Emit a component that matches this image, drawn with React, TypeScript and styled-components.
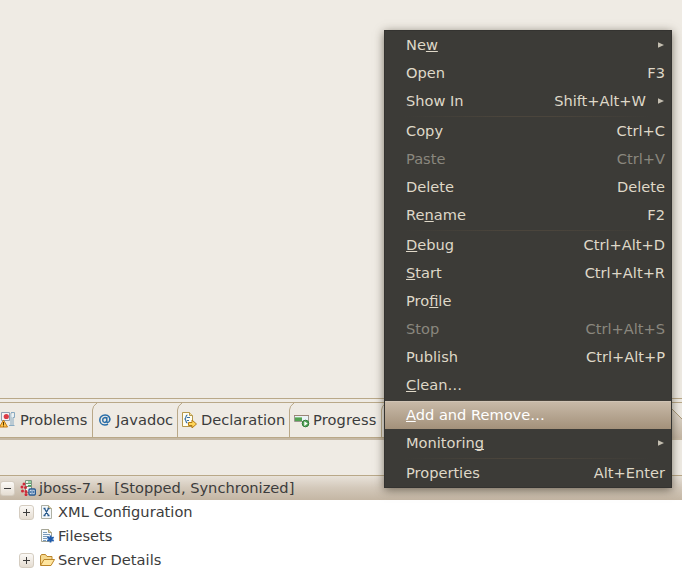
import React from "react";
import styled, { createGlobalStyle, css } from "styled-components";

const Global = createGlobalStyle`
  * { box-sizing: border-box; }
  body { margin: 0; overflow: hidden; }
`;

const Screen = styled.div`
  position: relative;
  width: 682px;
  height: 575px;
  overflow: hidden;
  display: flex;
  flex-direction: column;
  background: #efebe4;
  color: #3c3c3c;
  font: 14.63px/24px "DejaVu Sans", sans-serif;
  white-space: pre;
`;

const Editor = styled.div`
  height: 399px;
  border-bottom: 1px solid #b9a888;
`;

const TabBar = styled.div`
  display: flex;
  height: 38px;
  margin-top: 3px;
  border-top: 1px solid #b9a888;
  border-bottom: 2px solid #c6b9a5;
  box-shadow: inset 0 -1px 0 #b9a888;
`;

const Tab = styled.div<{ $width: number; $first?: boolean }>`
  position: relative;
  display: flex;
  align-items: center;
  flex: none;
  width: ${(p) => p.$width}px;
  height: 34px;
  padding-left: ${(p) => (p.$first ? 0 : 5)}px;
`;

const TabEdge = styled.svg`
  position: absolute;
  left: 0;
  top: -1px;
`;

const Icon = styled.svg`
  flex: none;
  width: 16px;
  height: 16px;
`;

const Label = styled.span<{ $gap: number; $tracking?: number }>`
  margin-left: ${(p) => p.$gap}px;
  letter-spacing: ${(p) => p.$tracking ?? 0}px;
`;

const ActiveTabEnd = styled.svg`
  margin-left: auto;
  flex: none;
`;

const Toolbar = styled.div`
  height: 35px;
`;

const Tree = styled.div`
  flex: 1;
  border-top: 1px solid #b9a888;
  background: #fff;
`;

const TreeRow = styled.div<{ $selected?: boolean; $indent: number }>`
  display: flex;
  align-items: center;
  height: 24px;
  padding-left: ${(p) => p.$indent}px;
  ${(p) =>
    p.$selected &&
    css`
      background: linear-gradient(#e8e2d9, #d3c8ba 50%, #c4b6a4);
    `}
`;

const Expander = styled.span`
  flex: none;
  width: 15px;
  height: 15px;
  margin-right: 5px;
  border: 1px solid #d5cdc1;
  border-radius: 3px;
  background: linear-gradient(#fbf9f6, #e5ddd2);
`;

const ExpanderSign = styled.svg`
  display: block;
  width: 13px;
  height: 13px;
`;

const Menu = styled.div`
  position: absolute;
  left: 384px;
  top: 30px;
  width: 288px;
  height: 458px;
  border: 1px solid #343330;
  background: #3c3b37;
  box-shadow: 0 2px 9px rgba(60, 50, 35, 0.65);
  font-size: 14.6px;
`;

const MenuItem = styled.div<{ $disabled?: boolean; $active?: boolean }>`
  display: flex;
  align-items: center;
  height: 28px;
  padding: 0 6px 0 21px;
  color: ${(p) => (p.$active ? "#fff" : p.$disabled ? "#8a877e" : "#dfd8c8")};
  ${(p) =>
    p.$active &&
    css`
      background: linear-gradient(#c9bba9, #a3917a);
      box-shadow: inset 0 1px 0 #d0c4b5;
    `}
`;

const Shortcut = styled.span<{ $submenu?: boolean }>`
  margin-left: auto;
  margin-right: ${(p) => (p.$submenu ? 12 : 0)}px;
`;

const Arrow = styled.svg<{ $alone?: boolean }>`
  flex: none;
  width: 6px;
  height: 6px;
  margin-right: 1px;
  margin-left: ${(p) => (p.$alone ? "auto" : "0")};
`;

const Separator = styled.div`
  height: 2px;
  padding: 1px 20px 0;
  background: linear-gradient(90deg, transparent, #4b453c 40%, #4b453c 60%, transparent) content-box;
`;

const Mnemonic = styled.span`
  text-decoration: underline;
  text-decoration-thickness: 1px;
  text-underline-offset: 1px;
  text-decoration-skip-ink: none;
`;

const ProblemsIcon = () => (
  <Icon viewBox="0 0 16 16">
    <path d="M1.5.5h8v8h-8z" fill="#f6f3f4" stroke="#8f9fb2" />
    <circle cx="6.3" cy="4.5" r="2.6" fill="#dc3b46" />
    <path d="M11 .5h3.5v5H13v8h1.500M11 1v12.500M9 13.500h4" fill="none" stroke="#88aac2" />
    <path d="M11.500 2h2v3h-2z" fill="#e9f3f8" />
    <path d="M3.5 8l4 7h-8z" fill="#ffc34c" stroke="#c57a12" />
    <path d="M3 10h1v3H3zm0 3.500h1v1H3z" fill="#523600" />
  </Icon>
);

const JavadocIcon = () => (
  <Icon viewBox="0 0 16 16">
    <path
      d="M9.8 5v4.600c0 1.400 2.200.9 2.700-.7C13.700 5.500 11.500 3 8.200 3 4.800 3 2.800 5.200 2.800 8s2 5 5 5c1.400 0 2.500-.3 3.200-.8M9.400 6.400C8.900 5.200 5.700 5.200 5.700 8c0 3 3 3 3.800 1"
      fill="none"
      stroke="#286da8"
      strokeWidth="1.500"
    />
  </Icon>
);

const DeclarationIcon = () => (
  <Icon viewBox="0 0 16 16">
    <path d="M.5.500h7l3 3v11H.5z" fill="#fffef2" stroke="#b5984b" />
    <path d="M7.500.500v3h3" fill="#f3dda0" stroke="#b5984b" />
    <path d="M5.500 3C3 3 5 6.500 2.500 7 5 7.500 3 11 5.500 11M5 5.500h3M5 8.500h2" fill="none" stroke="#3770a7" strokeWidth="1.200" />
    <path d="M6.500 10.500h3.500v-2.500l4.500 4-4.500 4v-2.500H6.500z" fill="#ffd65a" stroke="#b47b16" />
  </Icon>
);

const ProgressIcon = () => (
  <Icon viewBox="0 0 16 16">
    <path d="M.5 3.500h14v6H.5z" fill="#eaf3f7" stroke="#9b968f" />
    <path d="M0 3h15v1H0z" fill="#9b8476" />
    <path d="M1 5h7v4H1z" fill="#53a253" />
    <path d="M1 5h7v1H1z" fill="#8cc789" />
    <circle cx="11.500" cy="11.500" r="3.300" fill="#55a458" stroke="#2b7936" />
    <path d="M10.300 9.200l3.400 2.300-3.400 2.400z" fill="#fff" />
  </Icon>
);

const ServerIcon = () => (
  <Icon viewBox="0 0 16 16">
    <path d="M5.500.500h6v12h-6z" fill="#edf1ed" stroke="#7e9580" />
    <path d="M6 3.500h5M6 6.500h5" stroke="#6e8f75" />
    <path d="M8 1.500h3v1H8zm0 3.500h3v1H8z" fill="#38b254" />
    <path
      d="M4 4v.1M2 7v.1M5.500 7.500v.1M2.500 11v.1M6 11.500v.1M6 14.500v.1"
      fill="none"
      stroke="#cf2939"
      strokeWidth="3"
      strokeLinecap="round"
    />
    <rect x="9" y="9" width="6.300" height="6" rx="1" fill="#eaf2fb" stroke="#245790" strokeWidth="1.400" />
    <path d="M10.700 11h3v2h-3z" fill="#b8d3ed" stroke="#245790" strokeWidth=".8" />
  </Icon>
);

const XmlIcon = () => (
  <Icon viewBox="0 0 16 16">
    <path d="M2.500 1.500h7l3 3v10h-10z" fill="#f4f8fb" stroke="#aeb0a4" />
    <path d="M9.500 1.500v3h3" fill="#e6d9a8" stroke="#b1a987" />
    <path d="M5.500 4.500l4 7M9.500 4.500l-4 7M4.500 4.500h2M8.500 4.500h2M4.500 11.500h2M8.500 11.500h2" stroke="#245789" strokeWidth="1.300" />
  </Icon>
);

const FilesetIcon = () => (
  <Icon viewBox="0 0 16 16">
    <path d="M2.500 1.500h7l3 3v9h-10z" fill="#f8fbfd" stroke="#a5a698" />
    <path d="M9.500 1.500v3h3" fill="#e6d9a8" stroke="#aca178" />
    <path d="M4 4.500h4M4 6.500h7M4 8.500h6M4 10.500h4M4 12.500h3" stroke="#7a9bbb" />
    <path d="M11.500 7.500v7M8.300 9.300l6.400 3.600M14.700 9.300l-6.400 3.600" stroke="#1f5cad" strokeWidth="1.800" />
  </Icon>
);

const FolderIcon = () => (
  <Icon viewBox="0 0 16 16">
    <path d="M1.500 13V4l1-1.500h4L8 4.500h5v3" fill="#f6d98f" stroke="#bc8529" />
    <path d="M1.500 13.500l3.500-6h10.500l-3.500 6z" fill="#ffe6a0" stroke="#bc8529" />
  </Icon>
);

type TabSpec = { label: string; width: number; gap: number; tracking?: number; icon: React.ReactNode };

const tabs: TabSpec[] = [
  { label: "Problems", width: 92, gap: 4, icon: <ProblemsIcon /> },
  { label: "Javadoc", width: 85, gap: 3, icon: <JavadocIcon /> },
  { label: "Declaration", width: 112, gap: 3, icon: <DeclarationIcon /> },
  { label: "Progress", width: 92, gap: 3, tracking: 0.12, icon: <ProgressIcon /> },
  { label: "", width: 90, gap: 0, icon: null },
];

type Entry = {
  label: string;
  key?: string;
  shortcut?: string;
  submenu?: boolean;
  disabled?: boolean;
  active?: boolean;
};

const groups: Entry[][] = [
  [
    { label: "New", key: "w", submenu: true },
    { label: "Open", shortcut: "F3" },
    { label: "Show In", shortcut: "Shift+Alt+W", submenu: true },
  ],
  [
    { label: "Copy", shortcut: "Ctrl+C" },
    { label: "Paste", shortcut: "Ctrl+V", disabled: true },
    { label: "Delete", shortcut: "Delete" },
    { label: "Rename", key: "n", shortcut: "F2" },
  ],
  [
    { label: "Debug", key: "D", shortcut: "Ctrl+Alt+D" },
    { label: "Start", key: "S", shortcut: "Ctrl+Alt+R" },
    { label: "Profile", key: "fi" },
    { label: "Stop", shortcut: "Ctrl+Alt+S", disabled: true },
    { label: "Publish", shortcut: "Ctrl+Alt+P" },
    { label: "Clean…", key: "C" },
  ],
  [
    { label: "Add and Remove…", key: "A", active: true },
    { label: "Monitoring", key: "g", submenu: true },
  ],
  [{ label: "Properties", shortcut: "Alt+Enter" }],
];

function MenuLabel({ text, mnemonic }: { text: string; mnemonic?: string }) {
  if (!mnemonic) return <span>{text}</span>;
  const at = text.lastIndexOf(mnemonic);
  return (
    <span>
      {text.slice(0, at)}
      <Mnemonic>{mnemonic}</Mnemonic>
      {text.slice(at + mnemonic.length)}
    </span>
  );
}

function Toggle({ open }: { open?: boolean }) {
  return (
    <Expander>
      <ExpanderSign viewBox="0 0 13 13">
        <path d={open ? "M3 6.500h7" : "M3 6.500h7M6.500 3v7"} stroke="#3c3c3c" />
      </ExpanderSign>
    </Expander>
  );
}

export default function App() {
  return (
    <>
      <Global />
      <Screen>
        <Editor />
        <TabBar>
          {tabs.map((tab, i) => (
            <Tab key={i} $width={tab.width} $first={i === 0}>
              {i > 0 && (
                <TabEdge width="8" height="36">
                  <path d="M.5 36V8Q.5 4 5 1" fill="none" stroke="#b9a888" />
                </TabEdge>
              )}
              {tab.icon}
              <Label $gap={tab.gap} $tracking={tab.tracking}>
                {tab.label}
              </Label>
            </Tab>
          ))}
          <ActiveTabEnd width="22" height="35">
            <defs>
              <linearGradient id="tabFill" x1="0" y1="0" x2="0" y2="1">
                <stop offset="0" stopColor="#e8e2d9" />
                <stop offset="1" stopColor="#c4b6a4" />
              </linearGradient>
            </defs>
            <path d="M0 0h6l16 16v19H0z" fill="url(#tabFill)" />
            <path d="M6 0l16 16" stroke="#a99878" />
          </ActiveTabEnd>
        </TabBar>
        <Toolbar />
        <Tree>
          <TreeRow $selected $indent={0}>
            <Toggle open />
            <ServerIcon />
            <Label $gap={3}>jboss-7.1  [Stopped, Synchronized]</Label>
          </TreeRow>
          <TreeRow $indent={19}>
            <Toggle />
            <XmlIcon />
            <Label $gap={3}>XML Configuration</Label>
          </TreeRow>
          <TreeRow $indent={39}>
            <FilesetIcon />
            <Label $gap={3}>Filesets</Label>
          </TreeRow>
          <TreeRow $indent={19}>
            <Toggle />
            <FolderIcon />
            <Label $gap={3}>Server Details</Label>
          </TreeRow>
        </Tree>
        <Menu>
          {groups.map((group, g) => (
            <React.Fragment key={g}>
              {g > 0 && <Separator />}
              {group.map((item) => (
                <MenuItem key={item.label} $disabled={item.disabled} $active={item.active}>
                  <MenuLabel text={item.label} mnemonic={item.key} />
                  {item.shortcut && <Shortcut $submenu={item.submenu}>{item.shortcut}</Shortcut>}
                  {item.submenu && (
                    <Arrow viewBox="0 0 6 6" $alone={!item.shortcut}>
                      <path d="M0 .3L6 3 0 5.700z" fill="#c4beb0" />
                    </Arrow>
                  )}
                </MenuItem>
              ))}
            </React.Fragment>
          ))}
        </Menu>
      </Screen>
    </>
  );
}
